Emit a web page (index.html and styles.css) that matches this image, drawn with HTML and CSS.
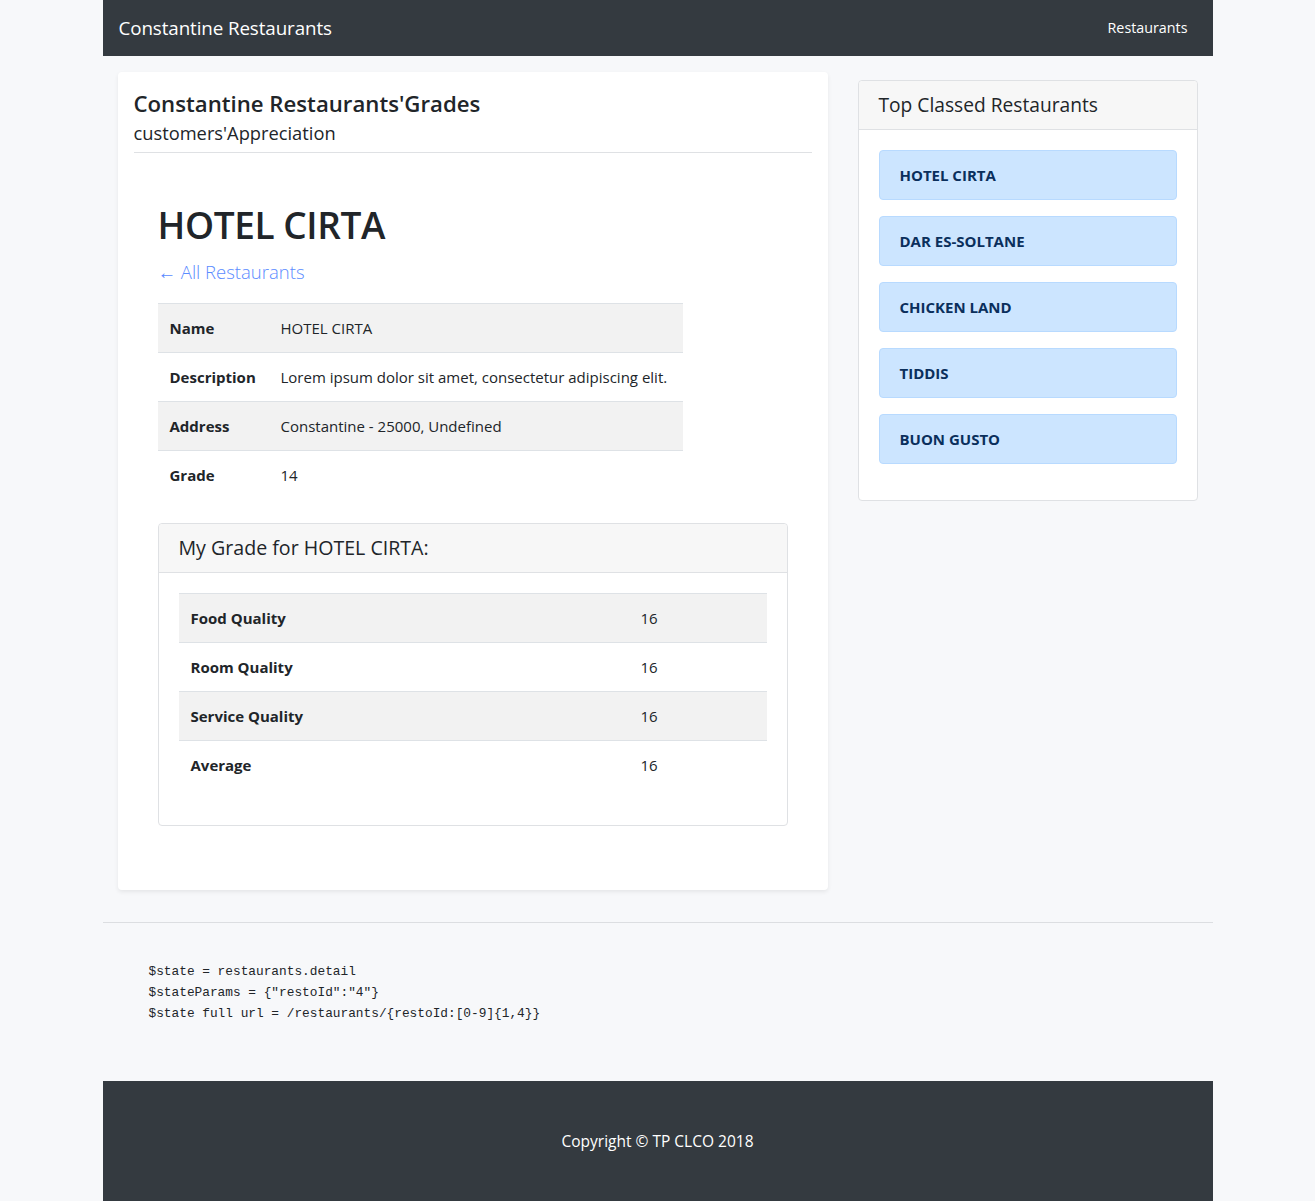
FILE: index.html
```html
<!DOCTYPE html>
<html lang="en">
<head>
<meta charset="utf-8">
<title>Constantine Restaurants</title>
<link rel="stylesheet" href="styles.css">
</head>
<body>
<div class="container">
  <nav class="navbar">
    <a class="brand" href="#">Constantine Restaurants</a>
    <a class="nav-link" href="#">Restaurants</a>
  </nav>

  <div class="row">
    <main class="col-main">
      <div class="main-card">
        <h4 class="page-title">Constantine Restaurants'Grades</h4>
        <p class="page-sub">customers'Appreciation</p>
        <hr class="title-rule">

        <div class="detail">
          <h1 class="resto-name">HOTEL CIRTA</h1>
          <a class="back-link" href="#">← All Restaurants</a>

          <table class="table info-table">
            <tbody>
              <tr class="odd"><th>Name</th><td>HOTEL CIRTA</td></tr>
              <tr><th>Description</th><td>Lorem ipsum dolor sit amet, consectetur adipiscing elit.</td></tr>
              <tr class="odd"><th>Address</th><td>Constantine - 25000, Undefined</td></tr>
              <tr><th>Grade</th><td>14</td></tr>
            </tbody>
          </table>

          <div class="card grade-card">
            <div class="card-header">My Grade for HOTEL CIRTA:</div>
            <div class="card-body">
              <table class="table grade-table">
                <tbody>
                  <tr class="odd"><th>Food Quality</th><td>16</td></tr>
                  <tr><th>Room Quality</th><td>16</td></tr>
                  <tr class="odd"><th>Service Quality</th><td>16</td></tr>
                  <tr><th>Average</th><td>16</td></tr>
                </tbody>
              </table>
            </div>
          </div>
        </div>
      </div>
    </main>

    <aside class="col-side">
      <div class="card top-card">
        <div class="card-header">Top Classed Restaurants</div>
        <div class="card-body">
          <div class="alert">HOTEL CIRTA</div>
          <div class="alert">DAR ES-SOLTANE</div>
          <div class="alert">CHICKEN LAND</div>
          <div class="alert">TIDDIS</div>
          <div class="alert">BUON GUSTO</div>
        </div>
      </div>
    </aside>
  </div>

  <hr class="page-rule">

  <pre class="state">$state = restaurants.detail
$stateParams = {"restoId":"4"}
$state full url = /restaurants/{restoId:[0-9]{1,4}}</pre>

  <footer class="footer">Copyright © TP CLCO 2018</footer>
</div>
</body>
</html>
```

FILE: styles.css
```css
* { box-sizing: border-box; }

html, body {
  margin: 0;
  padding: 0;
}

body {
  background: #f7f8fa;
  color: #212529;
  font-family: "Open Sans", "Noto Sans", "Liberation Sans", sans-serif;
  font-size: 15px;
  line-height: 24px;
}

.container {
  width: 1110px;
  margin: 0 auto;
}

/* navbar */
.navbar {
  height: 56px;
  background: #343a40;
  display: flex;
  align-items: center;
  justify-content: space-between;
  padding: 0 25px 0 16px;
}

.brand {
  color: #fff;
  text-decoration: none;
  font-size: 18.8px;
  letter-spacing: -0.1px;
}

.nav-link {
  color: #fff;
  text-decoration: none;
  font-size: 14.3px;
}

/* layout */
.row {
  display: flex;
  padding-top: 16px;
}

.col-main {
  width: 740px;
  padding: 0 15px;
}

.col-side {
  width: 370px;
  padding: 8px 15px 0;
}

/* main card */
.main-card {
  background: #fff;
  border-radius: 4px;
  box-shadow: 0 2px 4px rgba(0, 0, 0, 0.075);
  padding: 17px 16px 64px;
}

.page-title {
  margin: 0;
  font-size: 22.2px;
  font-weight: 600;
  line-height: 30px;
}

.page-sub {
  margin: 0;
  font-size: 18.3px;
  font-weight: 400;
  line-height: 28px;
}

.title-rule {
  border: 0;
  border-top: 1px solid #dfe1e4;
  margin: 5px 0 0;
}

.detail {
  padding: 48px 24px 0;
}

.resto-name {
  margin: 0;
  font-size: 37px;
  font-weight: 600;
  line-height: 48px;
  letter-spacing: -0.4px;
}

.back-link {
  display: inline-block;
  color: #5b8cff;
  text-decoration: none;
  font-size: 18.5px;
  font-weight: 300;
  line-height: 28px;
  margin-top: 9px;
}

/* tables */
.table {
  border-collapse: collapse;
  margin-bottom: 16px;
}

.table th,
.table td {
  padding: 12px;
  border-top: 1px solid #dee2e6;
  text-align: left;
  vertical-align: top;
  line-height: 24px;
}

.table th {
  font-weight: 700;
}

.table td {
  font-weight: 400;
}

.table tr.odd {
  background: #f2f2f2;
}

.info-table {
  width: 525px;
  margin-top: 17px;
  margin-bottom: 24px;
}

.info-table th {
  width: 111px;
}

.grade-table {
  width: 100%;
}

.grade-table th {
  width: 450px;
}

/* cards */
.card {
  background: #fff;
  border: 1px solid #dfe1e4;
  border-radius: 4px;
}

.card-header {
  background: #f7f7f7;
  border-bottom: 1px solid #dfe1e4;
  padding: 12px 20px;
  font-size: 19.2px;
  line-height: 24px;
  border-radius: 4px 4px 0 0;
}

.grade-card .card-header {
  font-size: 19.6px;
}

.card-body {
  padding: 20px;
}

/* side */
.alert {
  background: #cce5ff;
  border: 1px solid #b8daff;
  color: #0a2f5c;
  border-radius: 4px;
  padding: 12px 20px;
  margin-bottom: 16px;
  font-weight: 700;
  line-height: 24px;
  font-size: 15px;
}

/* bottom */
.page-rule {
  border: 0;
  border-top: 1px solid #dcdee1;
  margin: 32px 0 0;
}

.state {
  margin: 38px 0 0;
  padding: 0 0 0 46px;
  font-family: "Liberation Mono", "DejaVu Sans Mono", monospace;
  font-size: 12.8px;
  line-height: 21px;
  color: #212529;
  height: 120px;
}

.footer {
  background: #343a40;
  color: #fff;
  text-align: center;
  height: 120px;
  line-height: 120px;
  font-size: 15.5px;
}
```
